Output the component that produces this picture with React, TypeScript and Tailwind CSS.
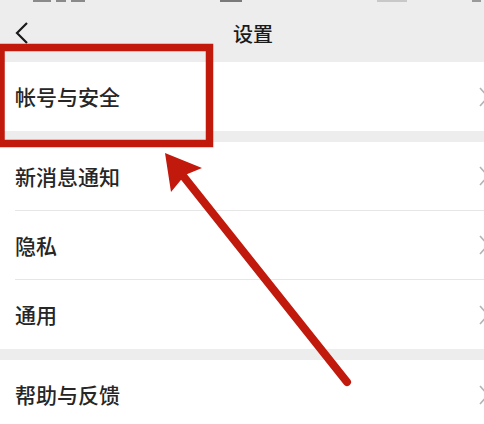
import React from "react";

const Chevron = () => (
  <svg width="12" height="22" viewBox="0 0 12 22" className="shrink-0 -mr-[6px]">
    <path d="M2 2 L10 11 L2 20" fill="none" stroke="#b4b4b4" strokeWidth="1.6" />
  </svg>
);

const Row = ({ label, sep }: { label: string; sep?: boolean }) => (
  <div className="h-[69px] flex pl-[15px] bg-white">
    <div className={"flex-1 flex items-center justify-between " + (sep ? "border-b border-[#e6e6e6]" : "")}>
      <span className="text-[21px] font-medium text-[#262626] leading-none">{label}</span>
      <Chevron />
    </div>
  </div>
);

export default function App() {
  return (
    <div
      className="relative w-[484px] h-[424px] overflow-hidden bg-[#ededed]"
      style={{ fontFamily: '"Noto Sans CJK SC", "Noto Sans", sans-serif' }}
    >
      <div className="h-[62px] relative flex items-center justify-center bg-[#ededed]">
        <div className="absolute top-0 left-0 right-0 h-[2px] flex">
          <div className="ml-[33px] w-[18px] bg-[#8a8a8a]" />
          <div className="ml-[5px] w-[10px] bg-[#8a8a8a]" />
          <div className="ml-[5px] w-[14px] bg-[#8a8a8a]" />
          <div className="ml-[135px] w-[22px] bg-[#7a7a7a]" />
          <div className="ml-[135px] w-[30px] bg-[#c8c8c8]" />
          <div className="ml-[65px] w-[9px] bg-[#9a9a9a]" />
        </div>
        <svg width="16" height="24" viewBox="0 0 16 24" className="absolute left-[14px] top-[21px]">
          <path d="M13 2 L3 12 L13 22" fill="none" stroke="#1a1a1a" strokeWidth="2.2" />
        </svg>
        <span className="text-[20px] font-medium text-[#1a1a1a] leading-none mt-[6px] ml-[22px]">设置</span>
      </div>
      <Row label="帐号与安全" />
      <div className="h-[11px]" />
      <Row label="新消息通知" sep />
      <Row label="隐私" sep />
      <Row label="通用" />
      <div className="h-[11px]" />
      <Row label="帮助与反馈" />

      <svg className="absolute inset-0 pointer-events-none" width="484" height="424" viewBox="0 0 484 424">
        <rect x="1" y="47.5" width="208.5" height="96" fill="none" stroke="#c2190d" strokeWidth="7.5" />
        <line x1="180" y1="172" x2="347" y2="382" stroke="#c2190d" strokeWidth="8" strokeLinecap="round" />
        <polygon points="165,153 202,168 185,175 171,192" fill="#c2190d" />
      </svg>
    </div>
  );
}
